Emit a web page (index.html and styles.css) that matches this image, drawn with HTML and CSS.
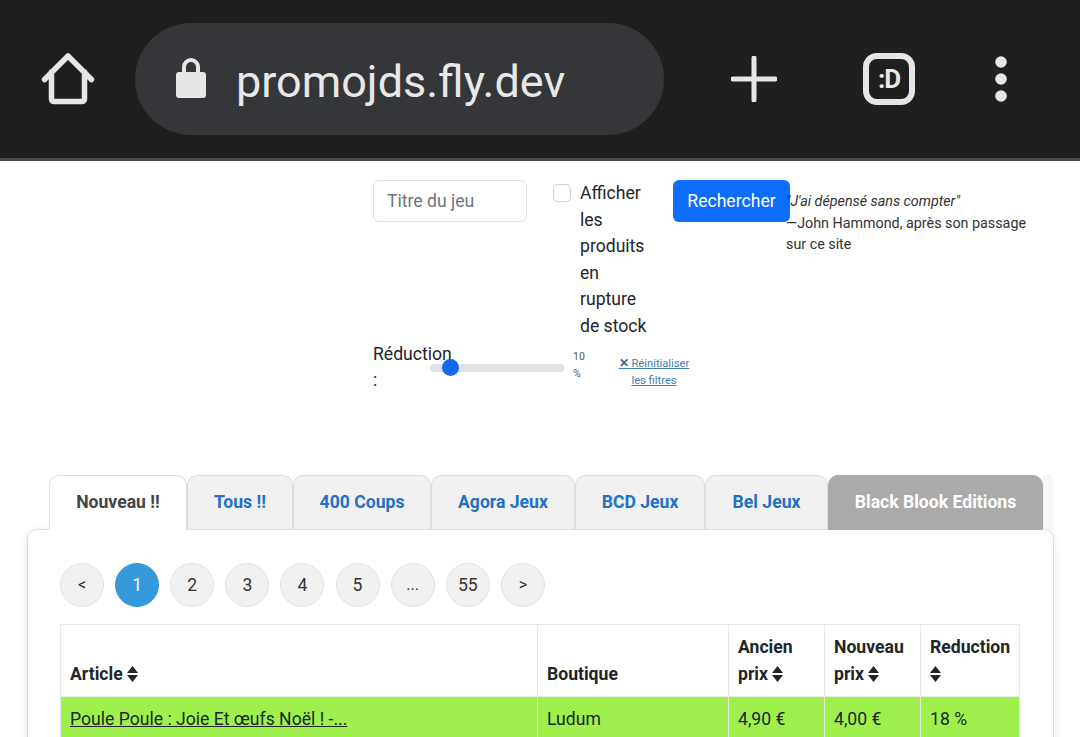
FILE: index.html
```html
<!DOCTYPE html>
<html lang="fr">
<head>
<meta charset="utf-8">
<title>promojds.fly.dev</title>
<link rel="stylesheet" href="styles.css">
</head>
<body>
<header class="browser">
  <svg class="home" width="54" height="56" viewBox="0 0 54 56"><path d="M3.500 28.500 27 5l23.500 23.500M10.500 21v27a2.500 2.500 0 0 0 2.500 2.500h28a2.500 2.500 0 0 0 2.500-2.500V21" fill="none" stroke="#e6e6e6" stroke-width="5.500" stroke-linecap="round" stroke-linejoin="round"/></svg>
  <div class="omnibox">
    <svg class="lock" width="30" height="40" viewBox="0 0 30 40"><path d="M8 17V9a7 7 0 0 1 14 0v8" fill="none" stroke="#e6e6e6" stroke-width="4"/><rect x="0" y="14" width="30" height="26" rx="3" fill="#e6e6e6"/></svg>
    <span class="url">promojds.fly.dev</span>
  </div>
  <svg class="plus" width="46" height="46" viewBox="0 0 46 46"><path d="M23 2v42M2 23h42" stroke="#e6e6e6" stroke-width="5" stroke-linecap="round"/></svg>
  <div class="tabcount">:D</div>
  <svg class="dots" width="12" height="46" viewBox="0 0 12 46"><circle cx="6" cy="6" r="5.800" fill="#e6e6e6"/><circle cx="6" cy="23" r="5.800" fill="#e6e6e6"/><circle cx="6" cy="40" r="5.800" fill="#e6e6e6"/></svg>
</header>

<main class="page">
  <section class="top">
    <form class="filters">
      <div class="row-one">
        <div class="search">Titre du jeu</div>
        <label class="stock"><span class="check"></span><span class="stock-text">Afficher les produits en rupture de stock</span></label>
        <button class="go" type="button">Rechercher</button>
      </div>
      <div class="row-two">
        <span class="red-label">Réduction :</span>
        <span class="slider"><span class="thumb"></span></span>
        <span class="red-val">10 %</span>
        <a class="reset" href="#"><span class="x">✕</span> Réinitialiser les filtres</a>
      </div>
    </form>
    <blockquote class="quote"><em>"J'ai dépensé sans compter"</em><br>—John Hammond, après son passage sur ce site</blockquote>
  </section>

  <nav class="tabs">
    <a class="tab active" href="#">Nouveau !!</a>
    <a class="tab t2" href="#">Tous !!</a>
    <a class="tab t3" href="#">400 Coups</a>
    <a class="tab t4" href="#">Agora Jeux</a>
    <a class="tab t5" href="#">BCD Jeux</a>
    <a class="tab t6" href="#">Bel Jeux</a>
    <a class="tab grey" href="#">Black Blook Editions</a>
    <span class="tab faint"></span>
  </nav>

  <section class="card">
    <div class="pager">
      <a class="pg small" href="#">&lt;</a>
      <a class="pg on" href="#">1</a>
      <a class="pg" href="#">2</a>
      <a class="pg" href="#">3</a>
      <a class="pg" href="#">4</a>
      <a class="pg" href="#">5</a>
      <a class="pg small" href="#">...</a>
      <a class="pg" href="#">55</a>
      <a class="pg small" href="#">&gt;</a>
    </div>
    <table class="deals">
      <colgroup><col class="c1"><col class="c2"><col class="c3"><col class="c4"><col class="c5"></colgroup>
      <thead>
        <tr>
          <th>Article <svg class="sort" viewBox="0 0 11 16"><path d="M5.500 0 11 7H0zM0 9h11l-5.500 7z"/></svg></th>
          <th>Boutique</th>
          <th>Ancien prix <svg class="sort" viewBox="0 0 11 16"><path d="M5.500 0 11 7H0zM0 9h11l-5.500 7z"/></svg></th>
          <th>Nouveau prix <svg class="sort" viewBox="0 0 11 16"><path d="M5.500 0 11 7H0zM0 9h11l-5.500 7z"/></svg></th>
          <th>Reduction <svg class="sort" viewBox="0 0 11 16"><path d="M5.500 0 11 7H0zM0 9h11l-5.500 7z"/></svg></th>
        </tr>
      </thead>
      <tbody>
        <tr>
          <td><a href="#">Poule Poule : Joie Et œufs Noël ! -...</a></td>
          <td>Ludum</td>
          <td>4,90 €</td>
          <td>4,00 €</td>
          <td>18 %</td>
        </tr>
      </tbody>
    </table>
  </section>
</main>
</body>
</html>
```
FILE: styles.css
```css
* { box-sizing: border-box; }
html, body { margin: 0; padding: 0; height: 737px; overflow: hidden; background: #fff; }
body { font-family: Roboto, "Liberation Sans", sans-serif; color: #212529; font-size: 17.600px; line-height: 26.600px; }

.browser { height: 161px; background: #1f1f1f; border-bottom: 3px solid #4b4b4b; display: flex; align-items: flex-start; }
.home { margin: 51px 0 0 41px; flex: none; }
.omnibox { flex: none; margin: 23px 0 0 40px; width: 529px; height: 112px; border-radius: 56px; background: #35363a; display: flex; align-items: center; padding-left: 41px; }
.lock { flex: none; margin-top: -2px; }
.url { margin-left: 30px; font-size: 45px; line-height: 52px; color: #e8e8e8; margin-top: 6px; }
.plus { flex: none; margin: 56px 0 0 67px; }
.tabcount { flex: none; margin: 53px 0 0 86px; width: 52px; height: 52px; border: 6px solid #e6e6e6; border-radius: 14px; color: #e6e6e6; font-size: 26px; font-weight: 700; line-height: 40px; text-align: center; letter-spacing: -1px; }
.dots { flex: none; margin: 56px 0 0 80px; }

.top { display: flex; align-items: flex-start; padding: 19px 0 0 373px; height: 314px; }
.filters { width: 413px; flex: none; }
.row-one { display: flex; align-items: flex-start; }
.search { flex: none; width: 154px; height: 42px; border: 1px solid #dee2e6; border-radius: 6px; padding: 7px 13px; color: #6c757d; }
.stock { flex: none; display: flex; align-items: flex-start; margin-left: 26px; width: 120px; }
.check { flex: none; width: 18px; height: 18px; margin-top: 4px; border: 1px solid #ccd1d6; border-radius: 4.500px; }
.stock-text { width: 68px; margin-left: 9px; }
.go { flex: none; width: 117px; height: 42px; background: #0d6efd; border: 0; border-radius: 6px; color: #fff; font: 17.600px/26px Roboto, sans-serif; padding: 0; white-space: nowrap; }
.row-two { display: flex; align-items: flex-start; margin-top: 1px; }
.red-label { width: 57px; flex: none; }
.slider { flex: none; width: 134px; height: 8px; margin: 23px 0 0 0; border-radius: 4px; background: #dee2e6; position: relative; }
.thumb { position: absolute; left: 12px; top: -4.500px; width: 17px; height: 17px; border-radius: 50%; background: #156ae8; }
.red-val { width: 13px; flex: none; margin: 7px 0 0 9px; font-size: 10.500px; line-height: 17px; color: #555; }
.reset { flex: none; width: 74px; margin: 14px 0 0 31px; font-size: 11.200px; line-height: 17px; text-align: center; color: #3d80b5; text-decoration: underline; }
.x { color: #2a6aa5; font-size: 12px; font-weight: 700; line-height: 1; }
.quote { margin: 11px 0 0 0; width: 250px; flex: none; font-size: 14.300px; line-height: 21.500px; color: #333; }

.tabs { display: flex; height: 54px; padding-left: 49px; position: relative; z-index: 1; font-weight: 700; }
.tab { display: flex; align-items: center; justify-content: center; height: 55px; padding-bottom: 1px; background: #f1f1f1; border: 1px solid #ddd; border-radius: 10px 10px 0 0; color: #2470c4; text-decoration: none; }
.active { width: 138px; background: #fff; border-bottom-color: #fff; color: #444; }
.t2 { width: 106px; }
.t3 { width: 138px; }
.t4 { width: 144px; }
.t5 { width: 130px; }
.t6 { width: 123px; }
.grey { width: 215px; background: #aaa; border-color: #aaa; color: #fff; }
.faint { width: 10px; background: #f7f7f7; border-color: #f0f0f0; border-right: 0; }

.card { margin: 0 26px 0 27px; height: 300px; background: #fff; border: 1px solid #ddd; border-radius: 10px; padding: 33px 33px 0 32px; box-shadow: 0 2px 10px rgba(0,0,0,.1); }
.pager { display: flex; gap: 11.120px; }
.pg { width: 44px; height: 44px; flex: none; display: flex; align-items: center; justify-content: center; border-radius: 50%; background: #f1f1f1; border: 1px solid #e2e2e2; color: #333; text-decoration: none; }
.small { font-size: 16px; }
.on { background: #3498db; border-color: #3498db; color: #fff; }
.deals { margin-top: 17px; width: 960px; table-layout: fixed; border-collapse: collapse; }
.c1 { width: 477px; }
.c2 { width: 191px; }
.c3 { width: 96px; }
.c4 { width: 96px; }
.c5 { width: 99px; }
.deals th, .deals td { border: 1px solid #e9e9e9; padding: 8px 9px; text-align: left; vertical-align: bottom; }
.deals th { font-weight: 700; height: 72px; line-height: 27px; }
.deals td { background: #9ef14d; height: 45px; vertical-align: middle; }
.deals td a { color: #212529; }
.sort { width: 11px; height: 16px; fill: #212529; vertical-align: -2px; }
```
